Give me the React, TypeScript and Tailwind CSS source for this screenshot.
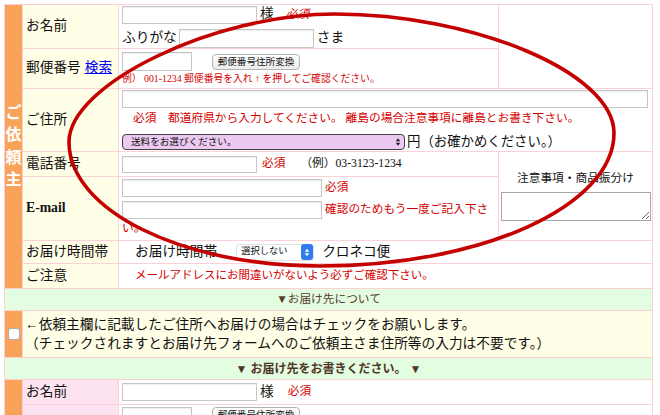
import React from 'react'

// Order form (ご依頼主 / お届け先) with a hand-drawn red ellipse on top.

const RED = 'text-[#d40000]'

function Field({ className = '' }: { className?: string }) {
  return (
    <span
      className={`inline-block shrink-0 border border-[#c6c6c6] bg-white align-middle shadow-[inset_0_1px_1px_rgba(0,0,0,0.07)] ${className}`}
    />
  )
}

function ZipButton() {
  return (
    <span className="ml-[20px] inline-flex h-[16px] w-[88px] items-center justify-center rounded-[4px] border border-[#b4b4b4] bg-gradient-to-b from-white to-[#ececec] text-[9.6px] leading-none text-[#111]">
      郵便番号住所変換
    </span>
  )
}

function Label({ children, pink = false }: { children?: React.ReactNode; pink?: boolean }) {
  return (
    <div
      className={`flex items-center pl-[3px] text-[13.7px] text-[#111] ${pink ? 'bg-[#fde3ef]' : 'bg-[#fffee6]'}`}
    >
      {children}
    </div>
  )
}

function UpDown({ className = '' }: { className?: string }) {
  return (
    <svg viewBox="0 0 8 12" className={className}>
      <path d="M4 1 L7 5 L1 5 Z" fill="currentColor" />
      <path d="M4 11 L7 7 L1 7 Z" fill="currentColor" />
    </svg>
  )
}

export default function App() {
  return (
    <div className="relative h-[415px] w-[660px] overflow-hidden bg-white font-['Liberation_Serif','Noto_Sans_CJK_JP',serif] text-[#111]">
      <div className="ml-[4px] mt-[4px] grid w-[649px] grid-cols-[17px_95px_379px_153px] grid-rows-[43px_39px_62px_24px_63px_22px_24px_21px_46px_21px_24px_40px] gap-px bg-[#fcd0d7] p-px">
        {/* ご依頼主 */}
        <div className="row-span-7 flex flex-col items-center justify-center bg-[#f9a25a] text-[16px] font-bold leading-[22.5px] text-white">
          <span>ご</span>
          <span>依</span>
          <span>頼</span>
          <span>主</span>
        </div>

        {/* お名前 */}
        <Label>お名前</Label>
        <div className="flex flex-col justify-center gap-[3px] bg-white pl-[3px]">
          <div className="flex items-center">
            <Field className="h-[18px] w-[135px]" />
            <span className="ml-[3px] text-[13.7px]">様</span>
            <span className={`ml-[12px] text-[11.7px] italic ${RED}`}>必須</span>
          </div>
          <div className="flex items-center">
            <span className="text-[13.7px]">ふりがな</span>
            <Field className="ml-[2px] h-[19px] w-[135px]" />
            <span className="ml-[3px] text-[13.7px]">さま</span>
          </div>
        </div>
        <div className="row-span-2 bg-white" />

        {/* 郵便番号 */}
        <Label>
          郵便番号
          <span className="ml-[4px] text-[#0000ee] underline">検索</span>
        </Label>
        <div className="flex flex-col justify-center bg-white pl-[3px]">
          <div className="flex items-center">
            <Field className="h-[19px] w-[70px]" />
            <ZipButton />
          </div>
          <div className={`mt-[2px] text-[9.8px] leading-[12px] ${RED}`}>
            例） 001-1234 郵便番号を入れ ↑ を押してご確認ください。
          </div>
        </div>

        {/* ご住所 */}
        <Label>ご住所</Label>
        <div className="col-span-2 flex flex-col bg-white pl-[3px]">
          <Field className="mt-[1px] h-[18px] w-[526px]" />
          <div className={`mt-[4px] pl-[11px] text-[11.7px] leading-[14px] ${RED}`}>
            必須　都道府県から入力してください。 離島の場合注意事項に離島とお書き下さい。
          </div>
          <div className="mt-[6px] flex items-center">
            <span className="flex h-[16px] w-[283px] items-center justify-between rounded-[4px] border border-[#444] bg-[#ebc9f1] pl-[8px] pr-[3px] text-[9.6px] leading-none">
              送料をお選びください。
              <UpDown className="h-[10px] w-[6px] text-[#222]" />
            </span>
            <span className="ml-[2px] text-[13.4px]">円（お確かめください。）</span>
          </div>
        </div>

        {/* 電話番号 */}
        <Label>電話番号</Label>
        <div className="flex items-center bg-white pl-[3px]">
          <Field className="h-[17px] w-[135px]" />
          <span className={`ml-[5px] text-[11.7px] ${RED}`}>必須</span>
          <span className="ml-[15px] text-[11.7px]">（例）03-3123-1234</span>
        </div>
        <div className="row-span-2 flex flex-col items-center justify-center bg-white">
          <span className="text-[11.7px] leading-[14px]">注意事項・商品振分け</span>
          <textarea
            readOnly
            className="mt-[6px] h-[29px] w-[150px] border border-[#a8a8a8] bg-white"
          />
        </div>

        {/* E-mail */}
        <Label>
          <span className="font-bold">E-mail</span>
        </Label>
        <div className="flex flex-col bg-white pl-[3px] pt-[2px]">
          <div className="flex items-center">
            <Field className="h-[18px] w-[200px]" />
            <span className={`ml-[3px] text-[11.7px] ${RED}`}>必須</span>
          </div>
          <div className="mt-[3px] text-[11.7px] leading-[19px]">
            <Field className="h-[18px] w-[200px]" />
            <span className={`ml-[3px] ${RED}`}>確認のためもう一度ご記入下さい。</span>
          </div>
        </div>

        {/* お届け時間帯 */}
        <Label>お届け時間帯</Label>
        <div className="col-span-2 flex items-center bg-white pl-[16px]">
          <span className="text-[13.7px]">お届け時間帯</span>
          <span className="ml-[19px] flex h-[17px] w-[78px] items-center justify-between rounded-[3px] border border-[#e2e2e2] bg-white pl-[4px] text-[9.3px] leading-none">
            選択しない
            <span className="flex h-[16px] w-[12px] items-center justify-center rounded-[3px] bg-[#2f7cf0]">
              <UpDown className="h-[9px] w-[6px] text-white" />
            </span>
          </span>
          <span className="ml-[8px] text-[13.7px]">クロネコ便</span>
        </div>

        {/* ご注意 */}
        <Label>ご注意</Label>
        <div className={`col-span-2 flex items-center bg-white pl-[16px] text-[11.5px] ${RED}`}>
          メールアドレスにお間違いがないよう必ずご確認下さい。
        </div>

        {/* お届け先について */}
        <div className="col-span-4 flex items-center justify-center bg-[#e2fde0] text-[11.7px] text-[#5a3d30]">
          ▼お届け先について
        </div>

        <div className="flex items-center justify-center bg-[#f9a25a]">
          <span className="h-[12px] w-[12px] rounded-[3px] border border-[#aaa] bg-white" />
        </div>
        <div className="col-span-3 flex flex-col justify-center bg-[#fffee6] pl-[2px] text-[13.7px] leading-[19px]">
          <span>←依頼主欄に記載したご住所へお届けの場合はチェックをお願いします。</span>
          <span>（チェックされますとお届け先フォームへのご依頼主さま住所等の入力は不要です。）</span>
        </div>

        <div className="col-span-4 flex items-center justify-center bg-[#e2fde0] text-[12px] font-bold text-[#4f3428]">
          ▼ お届け先をお書きください。 ▼
        </div>

        {/* お届け先 */}
        <div className="row-span-2 bg-[#f9a25a]" />
        <Label pink>お名前</Label>
        <div className="col-span-2 flex items-center bg-white pl-[3px]">
          <Field className="h-[18px] w-[135px]" />
          <span className="ml-[3px] text-[13.7px]">様</span>
          <span className={`ml-[14px] text-[11.7px] ${RED}`}>必須</span>
        </div>

        <Label pink />
        <div className="col-span-2 flex items-start bg-white pl-[3px] pt-[2px]">
          <Field className="h-[19px] w-[70px]" />
          <ZipButton />
        </div>
      </div>

      {/* red hand-drawn ellipse */}
      <svg
        className="pointer-events-none absolute left-0 top-0"
        width="660"
        height="415"
        viewBox="0 0 660 415"
      >
        <path
          d="M69 142 C69 84 215 14 335 14 C474 14 614 73 614 133 C614 206 482 266 320 266 C181 266 69 210 69 142 Z"
          fill="none"
          stroke="#c40000"
          strokeWidth="3.6"
        />
      </svg>
    </div>
  )
}
